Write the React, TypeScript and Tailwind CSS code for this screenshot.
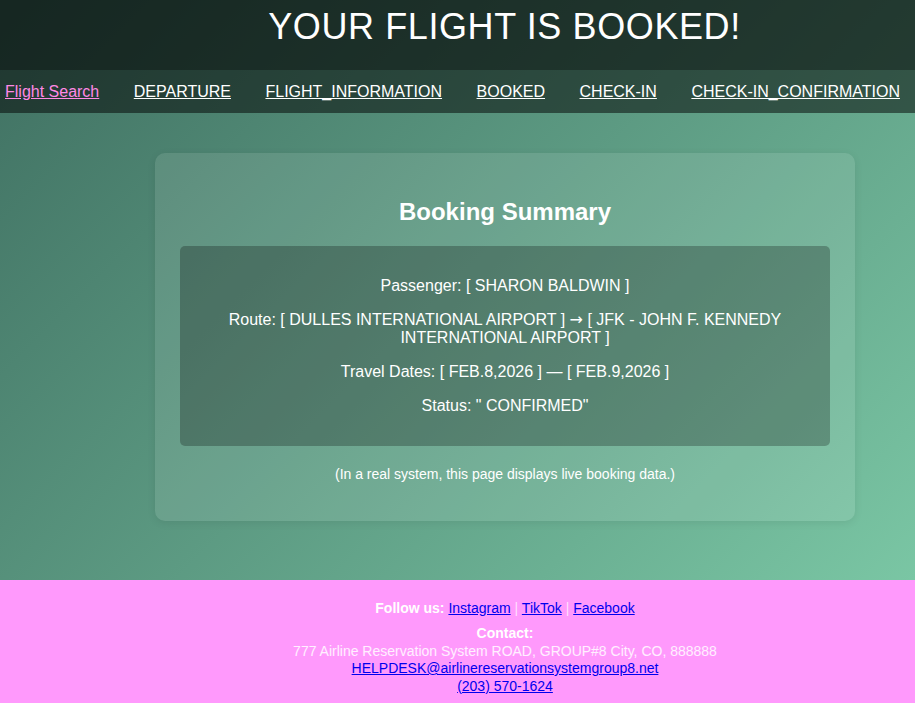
const navLinks = [
  { label: 'Flight Search', active: true },
  { label: 'DEPARTURE' },
  { label: 'FLIGHT_INFORMATION' },
  { label: 'BOOKED' },
  { label: 'CHECK-IN' },
  { label: 'CHECK-IN_CONFIRMATION' },
]

export default function App() {
  return (
    <div className="min-h-screen font-['Liberation_Sans',Arial,sans-serif] text-white">
      <div className="bg-[linear-gradient(135deg,#3f6f61,#7ac6a4)]">
        {/* Header */}
        <header className="h-[70px] bg-black/65 flex justify-center pl-[94px] pt-[6px]">
          <h1 className="text-[36px] leading-[41px] tracking-[0.6px] font-normal">YOUR FLIGHT IS BOOKED!</h1>
        </header>

        {/* Nav */}
        <nav className="h-[43px] bg-black/50 flex items-center gap-[34.5px] pl-[5px] text-base">
          {navLinks.map((l) => (
            <a
              key={l.label}
              href="#"
              className={`underline whitespace-nowrap ${l.active ? 'text-[#ff88e6]' : 'text-white'}`}
            >
              {l.label}
            </a>
          ))}
        </nav>

        {/* Main */}
        <main className="pt-10 pb-[59px] flex justify-center">
          <section className="w-[700px] ml-[95px] rounded-[10px] bg-white/10 px-[25px] pt-[25px] pb-[25px] text-center shadow-[0_2px_8px_rgba(0,0,0,0.08)]">
            <h2 className="text-2xl font-bold leading-[28px] my-5">Booking Summary</h2>
            <div className="rounded-[5px] bg-black/25 px-[15px] py-[15px] text-base leading-[18px]">
              <p className="my-4">Passenger: [ SHARON BALDWIN ]</p>
              <p className="my-4">
                Route: [ DULLES INTERNATIONAL AIRPORT ] <span className="font-['DejaVu_Sans',sans-serif]">→</span> [ JFK
                - JOHN F. KENNEDY INTERNATIONAL AIRPORT ]
              </p>
              <p className="my-4">Travel Dates: [ FEB.8,2026 ] — [ FEB.9,2026 ]</p>
              <p className="my-4">Status: " CONFIRMED"</p>
            </div>
            <p className="mt-5 mb-[14px] text-sm leading-4">(In a real system, this page displays live booking data.)</p>
          </section>
        </main>
      </div>

      {/* Footer */}
      <footer className="bg-[#ff99fc] pt-5 pb-4 pl-[95px] text-center text-sm">
        <p className="mb-2 leading-[17px]">
          <span className="font-bold">Follow us: </span>
          <a href="#" className="underline text-[#0000ee]">Instagram</a>
          <span className="text-white/70"> | </span>
          <a href="#" className="underline text-[#0000ee]">TikTok</a>
          <span className="text-white/70"> | </span>
          <a href="#" className="underline text-[#0000ee]">Facebook</a>
        </p>
        <div className="leading-[17.5px]">
          <p className="font-bold">Contact:</p>
          <p className="text-white/85">777 Airline Reservation System ROAD, GROUP#8 City, CO, 888888</p>
          <p>
            <a href="#" className="underline text-[#0000ee]">HELPDESK@airlinereservationsystemgroup8.net</a>
          </p>
          <p>
            <a href="#" className="underline text-[#0000ee]">(203) 570-1624</a>
          </p>
        </div>
      </footer>
    </div>
  )
}
